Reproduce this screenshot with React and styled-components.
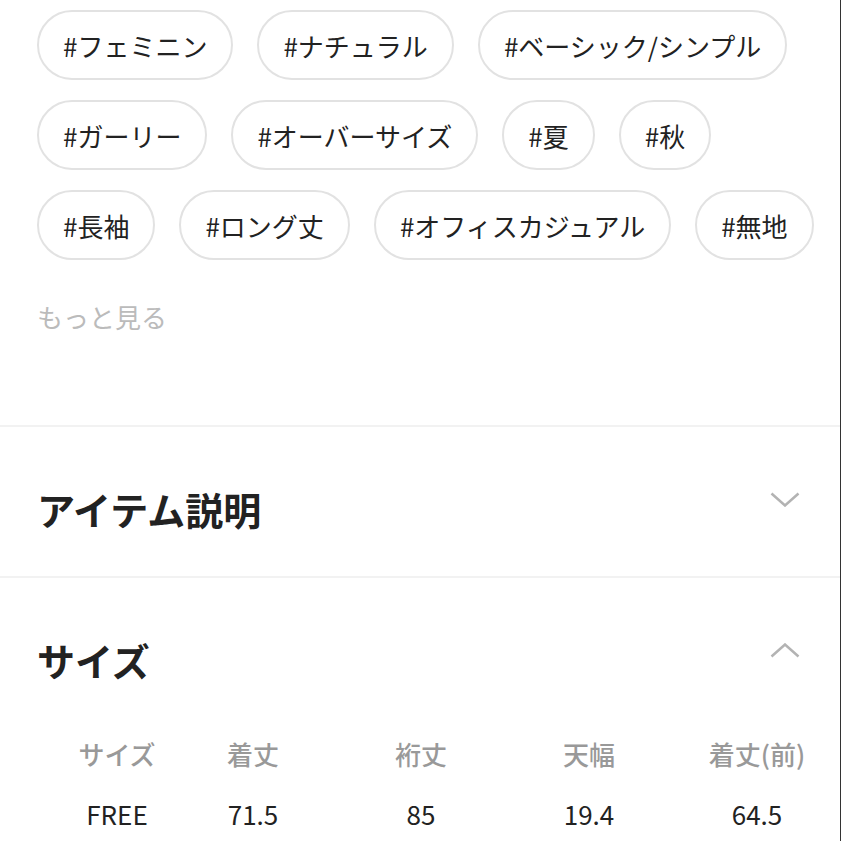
import React from 'react';
import styled, { createGlobalStyle } from 'styled-components';

const GlobalStyle = createGlobalStyle`
  body {
    margin: 0;
    background: #fff;
    font-family: 'Noto Sans CJK JP', 'Noto Sans', sans-serif;
    color: #222;
  }
`;

const Page = styled.div`
  width: 841px;
  min-height: 841px;
  box-sizing: border-box;
  border-right: 1px solid #333;
  overflow: hidden;
`;

const TagSection = styled.div`
  padding: 10px 20px 0 37px;
`;

const TagList = styled.div`
  display: flex;
  flex-wrap: wrap;
  gap: 20px 24px;
`;

const Tag = styled.div`
  height: 70px;
  box-sizing: border-box;
  padding: 0 24px;
  border: 2px solid #e2e2e2;
  border-radius: 35px;
  display: flex;
  align-items: center;
  font-size: 26px;
  color: #222;
  white-space: nowrap;
`;

const MoreLink = styled.div`
  margin-top: 39px;
  padding-bottom: 90px;
  font-size: 26px;
  line-height: 36px;
  color: #bbb;
`;

const Divider = styled.div`
  height: 2px;
  background: #f2f2f2;
`;

const SectionHeader = styled.div`
  display: flex;
  justify-content: space-between;
  align-items: flex-start;
  padding: 56px 40px ${(p) => p.$bottom}px 37px;
`;

const Heading = styled.h2`
  margin: 0;
  font-size: 38px;
  line-height: 52px;
  font-weight: 700;
  color: #222;
`;

const ChevronBox = styled.div`
  margin-top: 9px;
  width: 30px;
  height: 15px;
  display: flex;
`;

const SizeTable = styled.div`
  margin: 50px 0 0 65px;
  display: grid;
  grid-template-columns: 104px repeat(4, 168px);
`;

const Cell = styled.div`
  text-align: center;
  font-size: 26px;
  line-height: ${(p) => (p.$head ? '36px' : '50px')};
  padding-bottom: ${(p) => (p.$head ? '17px' : '0')};
  color: ${(p) => (p.$head ? '#999' : '#222')};
  font-weight: ${(p) => (p.$head ? 500 : 400)};
  white-space: nowrap;
`;

const Chevron = ({ up }) => (
  <ChevronBox>
    <svg width="30" height="15" viewBox="0 0 30 15">
      <polyline
        points={up ? '1.5,13.5 15,1.5 28.5,13.5' : '1.5,1.5 15,13.5 28.5,1.5'}
        fill="none"
        stroke="#b3b3b3"
        strokeWidth="2.5"
      />
    </svg>
  </ChevronBox>
);

const tags = [
  '#フェミニン',
  '#ナチュラル',
  '#ベーシック/シンプル',
  '#ガーリー',
  '#オーバーサイズ',
  '#夏',
  '#秋',
  '#長袖',
  '#ロング丈',
  '#オフィスカジュアル',
  '#無地',
];

const heads = ['サイズ', '着丈', '裄丈', '天幅', '着丈(前)'];
const values = ['FREE', '71.5', '85', '19.4', '64.5'];

export default function App() {
  return (
    <Page>
      <GlobalStyle />
      <TagSection>
        <TagList>
          {tags.map((t) => (
            <Tag key={t}>{t}</Tag>
          ))}
        </TagList>
        <MoreLink>もっと見る</MoreLink>
      </TagSection>
      <Divider />
      <SectionHeader $bottom={41}>
        <Heading>アイテム説明</Heading>
        <Chevron />
      </SectionHeader>
      <Divider />
      <SectionHeader $bottom={0}>
        <Heading>サイズ</Heading>
        <Chevron up />
      </SectionHeader>
      <SizeTable>
        {heads.map((h) => (
          <Cell $head key={h}>
            {h}
          </Cell>
        ))}
        {values.map((v) => (
          <Cell key={v}>{v}</Cell>
        ))}
      </SizeTable>
    </Page>
  );
}
